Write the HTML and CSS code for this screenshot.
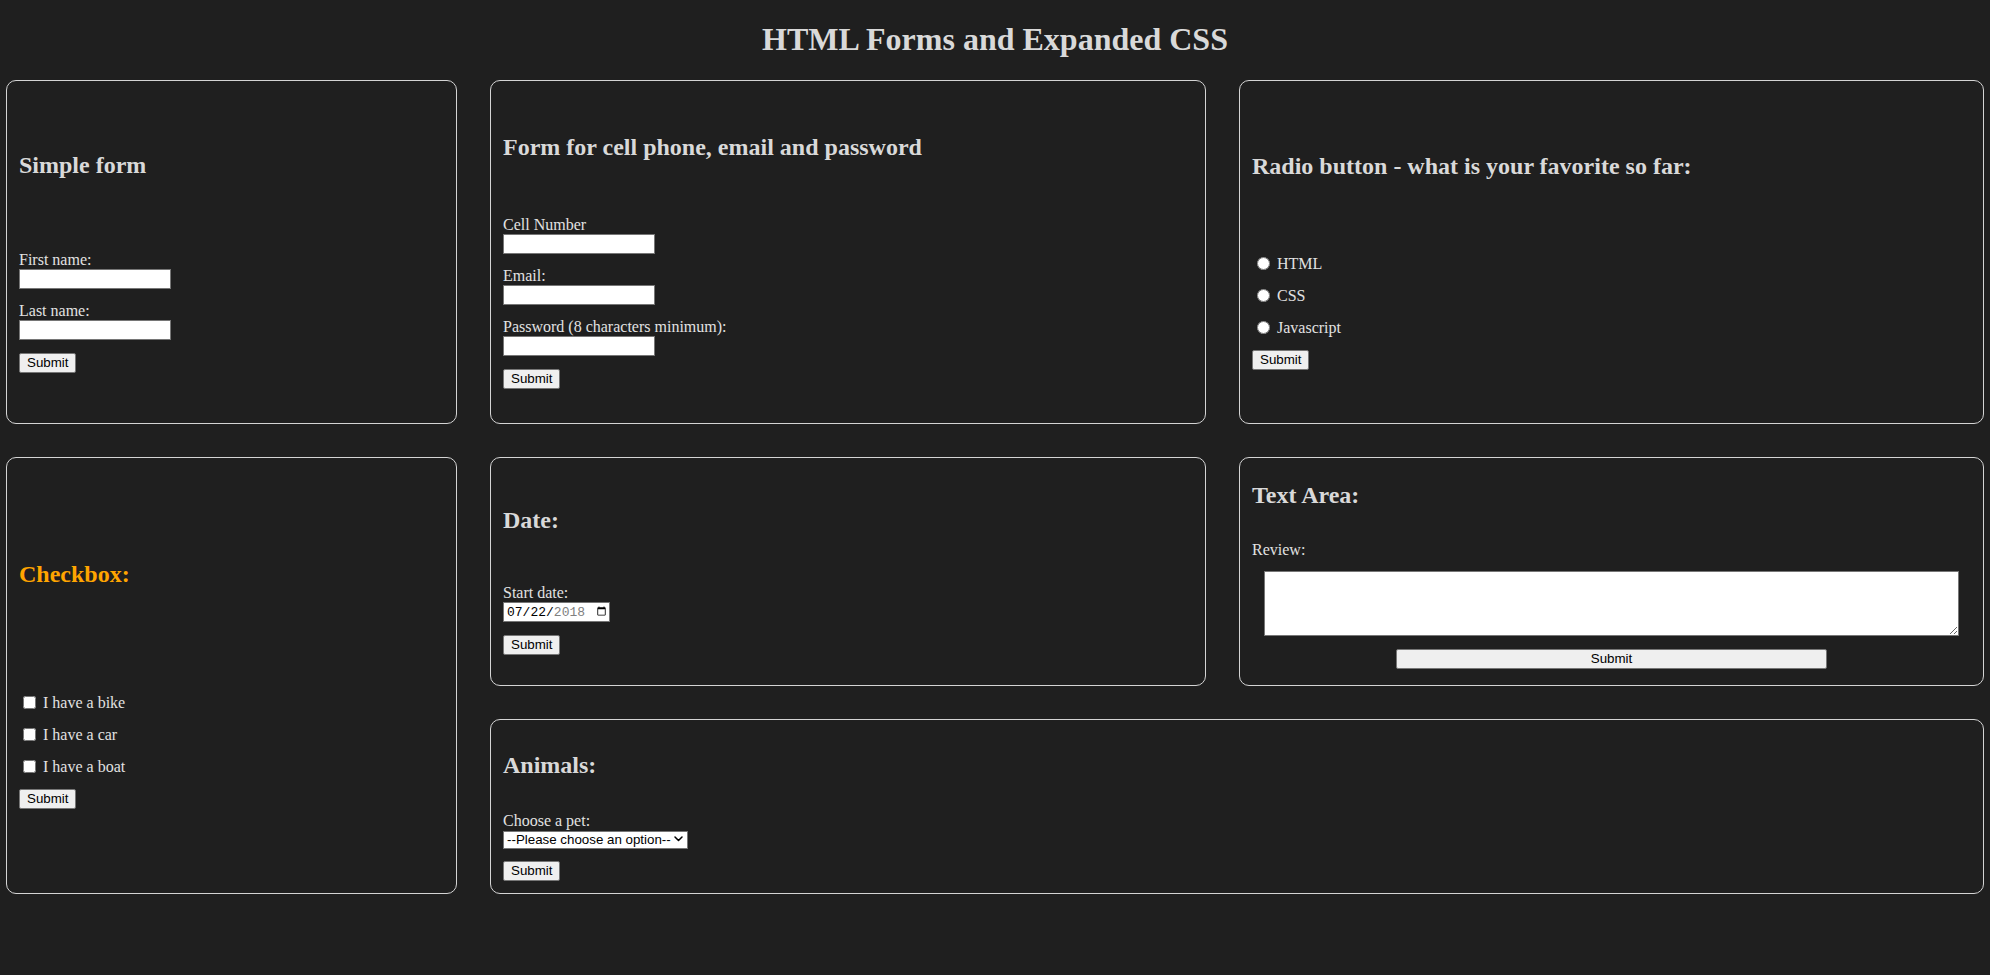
FILE: index.html
```html
<!DOCTYPE html>
<html lang="en">
<head>
<meta charset="utf-8">
<title>HTML Forms and Expanded CSS</title>
<link rel="stylesheet" href="styles.css">
</head>
<body>
<h1 class="page-title">HTML Forms and Expanded CSS</h1>
<main class="board">
  <section class="card card-simple">
    <h2 class="card-title">Simple form</h2>
    <form class="form">
      <label class="field-label" for="fname">First name:</label>
      <input class="text-input" id="fname" type="text">
      <label class="field-label" for="lname">Last name:</label>
      <input class="text-input" id="lname" type="text">
      <button class="btn" type="button">Submit</button>
    </form>
  </section>

  <section class="card card-contact">
    <h2 class="card-title">Form for cell phone, email and password</h2>
    <form class="form">
      <label class="field-label" for="cell">Cell Number</label>
      <input class="text-input" id="cell" type="tel">
      <label class="field-label" for="email">Email:</label>
      <input class="text-input" id="email" type="email">
      <label class="field-label" for="pass">Password (8 characters minimum):</label>
      <input class="text-input" id="pass" type="password">
      <button class="btn" type="button">Submit</button>
    </form>
  </section>

  <section class="card card-radio">
    <h2 class="card-title">Radio button - what is your favorite so far:</h2>
    <form class="form">
      <div class="choice"><input class="radio" type="radio" name="fav" id="r1"><label class="choice-label" for="r1">HTML</label></div>
      <div class="choice"><input class="radio" type="radio" name="fav" id="r2"><label class="choice-label" for="r2">CSS</label></div>
      <div class="choice"><input class="radio" type="radio" name="fav" id="r3"><label class="choice-label" for="r3">Javascript</label></div>
      <button class="btn" type="button">Submit</button>
    </form>
  </section>

  <section class="card card-checkbox">
    <h2 class="card-title card-title-accent">Checkbox:</h2>
    <form class="form">
      <div class="choice"><input class="check" type="checkbox" id="c1"><label class="choice-label" for="c1">I have a bike</label></div>
      <div class="choice"><input class="check" type="checkbox" id="c2"><label class="choice-label" for="c2">I have a car</label></div>
      <div class="choice"><input class="check" type="checkbox" id="c3"><label class="choice-label" for="c3">I have a boat</label></div>
      <button class="btn" type="button">Submit</button>
    </form>
  </section>

  <section class="card card-date">
    <h2 class="card-title">Date:</h2>
    <form class="form">
      <label class="field-label" for="start">Start date:</label>
      <input class="date-input" id="start" type="date" value="2018-07-22">
      <button class="btn" type="button">Submit</button>
    </form>
  </section>

  <section class="card card-textarea">
    <h2 class="card-title">Text Area:</h2>
    <form class="form form-centered">
      <label class="field-label field-label-left" for="review">Review:</label>
      <textarea class="review-box" id="review"></textarea>
      <button class="btn btn-wide" type="button">Submit</button>
    </form>
  </section>

  <section class="card card-animals">
    <h2 class="card-title">Animals:</h2>
    <form class="form">
      <label class="field-label" for="pet">Choose a pet:</label>
      <span class="select-wrap">
        <select class="pet-select" id="pet">
          <option value="">--Please choose an option--</option>
          <option value="dog">Dog</option>
          <option value="cat">Cat</option>
          <option value="hamster">Hamster</option>
        </select>
        <svg class="select-arrow" width="9" height="6" viewBox="0 0 9 6" aria-hidden="true"><path d="M1 1 L4.5 4.5 L8 1" fill="none" stroke="#000" stroke-width="1.5" stroke-linecap="round" stroke-linejoin="round"/></svg>
      </span>
      <button class="btn" type="button">Submit</button>
    </form>
  </section>
</main>
</body>
</html>
```

FILE: styles.css
```css
html, body {
  background: #1f1f1f;
}

body {
  margin: 0;
  color: #dedede;
  font-family: "Liberation Serif", "Times New Roman", serif;
  font-size: 16px;
}

.page-title {
  margin: 21px 0 23px;
  font-size: 32px;
  line-height: 36px;
  font-weight: bold;
  text-align: center;
  color: #d9d9d9;
}

.board {
  display: grid;
  grid-template-columns: 451px 716px 1fr;
  grid-template-rows: 344px 229px 175px;
  gap: 33px;
  padding: 0 6px;
}

.card {
  box-sizing: border-box;
  border: 1px solid #d4d4d4;
  border-radius: 10px;
  padding: 12px;
  display: flex;
  flex-direction: column;
  min-width: 0;
}

.card-simple { grid-column: 1; grid-row: 1; }
.card-contact { grid-column: 2; grid-row: 1; }
.card-radio { grid-column: 3; grid-row: 1; }
.card-checkbox { grid-column: 1; grid-row: 2 / 4; }
.card-date { grid-column: 2; grid-row: 2; }
.card-textarea { grid-column: 3; grid-row: 2; }
.card-animals { grid-column: 2 / 4; grid-row: 3; }

.card-title {
  margin: 0;
  font-size: 24px;
  line-height: 28px;
  font-weight: bold;
  color: #d9d9d9;
}

.card-title-accent {
  color: #ffa500;
}

.card-simple .card-title { margin-top: 58px; }
.card-simple .form { margin-top: 71px; }
.card-contact .card-title { margin-top: 40px; }
.card-contact .form { margin-top: 54px; }
.card-radio .card-title { margin-top: 59px; }
.card-radio .form { margin-top: 74px; }
.card-checkbox .card-title { margin-top: 90px; }
.card-checkbox .form { margin-top: 105px; }
.card-date .card-title { margin-top: 36px; }
.card-date .form { margin-top: 49px; }
.card-textarea .card-title { margin-top: 11px; }
.card-textarea .form { margin-top: 31px; }
.card-animals .card-title { margin-top: 19px; }
.card-animals .form { margin-top: 32px; }

.form {
  display: flex;
  flex-direction: column;
  align-items: flex-start;
}

.form-centered {
  align-items: center;
}

.field-label {
  display: block;
  line-height: 19px;
  color: #e2e2e2;
}

.field-label-left {
  align-self: flex-start;
}

.form > * + .field-label {
  margin-top: 12px;
}

.text-input,
.date-input,
.review-box,
.pet-select {
  box-sizing: border-box;
  margin: 0;
  border: 1px solid #767676;
  border-radius: 0;
  background: #fff;
  color: #000;
  outline: none;
}

.text-input {
  width: 152px;
  height: 20px;
  padding: 1px 2px;
  font: 13.333px "Liberation Sans", Arial, sans-serif;
}

.date-input {
  width: 107px;
  height: 20px;
  padding: 0 2px 0 3px;
  font: 13px "Liberation Mono", "Courier New", monospace;
}

.date-input::-webkit-datetime-edit {
  padding: 0;
}

.date-input::-webkit-datetime-edit-fields-wrapper {
  padding: 0;
}

.date-input::-webkit-datetime-edit-month-field,
.date-input::-webkit-datetime-edit-day-field,
.date-input::-webkit-datetime-edit-year-field {
  padding: 0;
}

.date-input::-webkit-datetime-edit-year-field {
  color: #808080;
}

.date-input::-webkit-calendar-picker-indicator {
  margin: 0;
  padding: 0;
  width: 11px;
  height: 12px;
}

.review-box {
  display: block;
  width: calc(100% - 24px);
  height: 65px;
  margin-top: 12px;
  resize: both;
  font: 13.333px "Liberation Mono", monospace;
}

.select-wrap {
  position: relative;
  display: inline-block;
  width: 185px;
  height: 18px;
}

.pet-select {
  -webkit-appearance: none;
  appearance: none;
  width: 185px;
  height: 18px;
  padding: 0 14px 0 3px;
  font: 13.333px "Liberation Sans", Arial, sans-serif;
  line-height: 16px;
}

.select-arrow {
  position: absolute;
  right: 5px;
  top: 6px;
  pointer-events: none;
}

.choice {
  display: flex;
  align-items: center;
  height: 19px;
  line-height: 19px;
  color: #e2e2e2;
}

.choice + .choice {
  margin-top: 13px;
}

.radio,
.check {
  width: 13px;
  height: 13px;
  margin: 0 3px 0 5px;
  flex: none;
}

.check {
  margin-left: 4px;
}

.choice-label {
  margin-left: 4px;
}

.btn {
  box-sizing: border-box;
  height: 20px;
  margin: 13px 0 0;
  padding: 0 7px;
  border: 1px solid #767676;
  border-radius: 2px;
  background: #efefef;
  color: #000;
  font: 13.333px "Liberation Sans", Arial, sans-serif;
  line-height: 18px;
}

.btn-wide {
  width: 60%;
}
```
